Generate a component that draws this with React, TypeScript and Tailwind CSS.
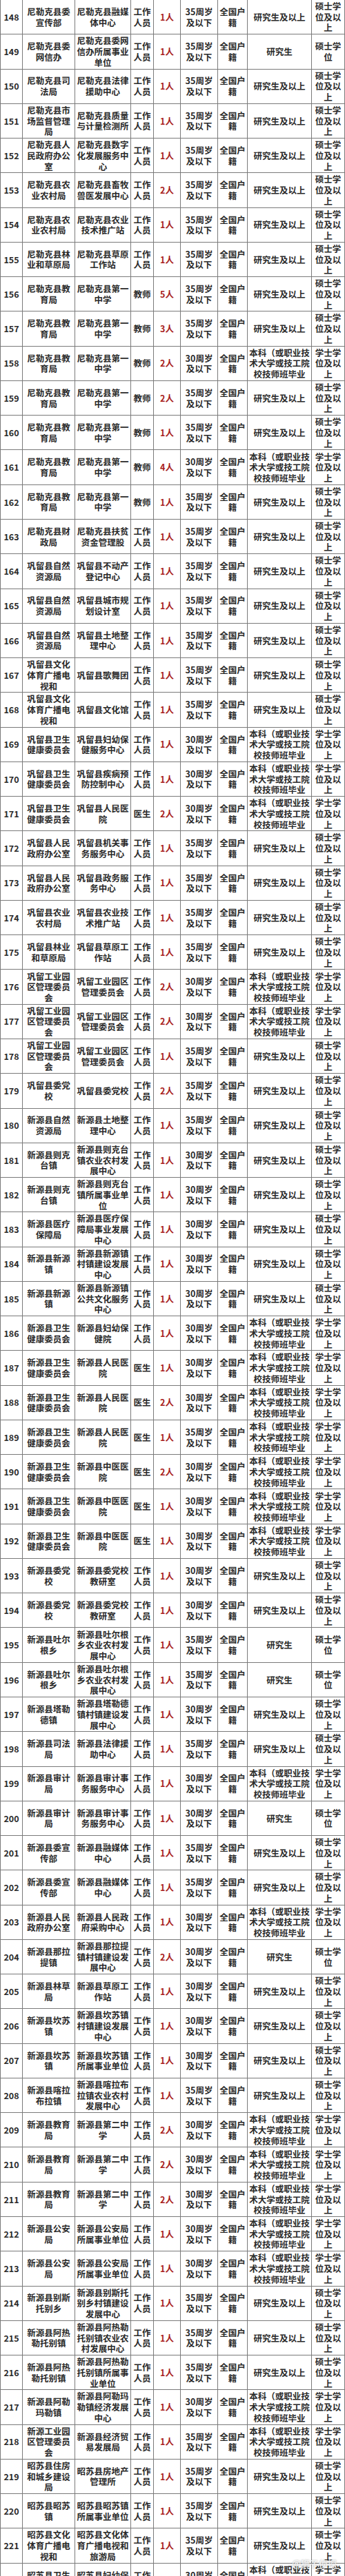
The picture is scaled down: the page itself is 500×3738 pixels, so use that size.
import React from 'react';

type Edu = 'Y' | 'G' | 'B';
type Row = [number, string, string, string, number, number, Edu];

const W = '工作人员';
const T = '教师';
const D = '医生';

const NLK_EDU = '尼勒克县教育局';
const NLK_1Z = '尼勒克县第一中学';
const GL_WT = '巩留县文化体育广播电视和';
const GL_WJ = '巩留县卫生健康委员会';
const GL_YQ = '巩留工业园区管理委员会';
const XY_WJ = '新源县卫生健康委员会';

const rows: Row[] = [
  [148, '尼勒克县委宣传部', '尼勒克县融媒体中心', W, 1, 35, 'Y'],
  [149, '尼勒克县委网信办', '尼勒克县委网信办所属事业单位', W, 1, 35, 'G'],
  [150, '尼勒克县司法局', '尼勒克县法律援助中心', W, 1, 35, 'Y'],
  [151, '尼勒克县市场监督管理局', '尼勒克县质量与计量检测所', W, 1, 35, 'Y'],
  [152, '尼勒克县人民政府办公室', '尼勒克县数字化发展服务中心', W, 1, 35, 'Y'],
  [153, '尼勒克县农业农村局', '尼勒克县畜牧兽医发展中心', W, 2, 35, 'Y'],
  [154, '尼勒克县农业农村局', '尼勒克县农业技术推广站', W, 1, 35, 'Y'],
  [155, '尼勒克县林业和草原局', '尼勒克县草原工作站', W, 1, 35, 'Y'],
  [156, NLK_EDU, NLK_1Z, T, 5, 35, 'Y'],
  [157, NLK_EDU, NLK_1Z, T, 3, 35, 'Y'],
  [158, NLK_EDU, NLK_1Z, T, 2, 30, 'B'],
  [159, NLK_EDU, NLK_1Z, T, 2, 35, 'Y'],
  [160, NLK_EDU, NLK_1Z, T, 1, 35, 'Y'],
  [161, NLK_EDU, NLK_1Z, T, 4, 30, 'B'],
  [162, NLK_EDU, NLK_1Z, T, 1, 35, 'Y'],
  [163, '尼勒克县财政局', '尼勒克县扶贫资金管理股', W, 1, 35, 'Y'],
  [164, '巩留县自然资源局', '巩留县不动产登记中心', W, 1, 35, 'Y'],
  [165, '巩留县自然资源局', '巩留县城市规划设计室', W, 1, 35, 'Y'],
  [166, '巩留县自然资源局', '巩留县土地整理中心', W, 1, 35, 'Y'],
  [167, GL_WT, '巩留县歌舞团', W, 1, 35, 'Y'],
  [168, GL_WT, '巩留县文化馆', W, 1, 35, 'Y'],
  [169, GL_WJ, '巩留县妇幼保健服务中心', W, 1, 30, 'B'],
  [170, GL_WJ, '巩留县疾病预防控制中心', W, 1, 30, 'B'],
  [171, GL_WJ, '巩留县人民医院', D, 2, 30, 'B'],
  [172, '巩留县人民政府办公室', '巩留县机关事务服务中心', W, 1, 35, 'Y'],
  [173, '巩留县人民政府办公室', '巩留县政务服务中心', W, 1, 35, 'Y'],
  [174, '巩留县农业农村局', '巩留县农业技术推广站', W, 1, 35, 'Y'],
  [175, '巩留县林业和草原局', '巩留县草原工作站', W, 1, 35, 'Y'],
  [176, GL_YQ, GL_YQ, W, 2, 30, 'B'],
  [177, GL_YQ, GL_YQ, W, 2, 30, 'B'],
  [178, GL_YQ, GL_YQ, W, 1, 35, 'Y'],
  [179, '巩留县委党校', '巩留县委党校', W, 2, 35, 'Y'],
  [180, '新源县自然资源局', '新源县土地整理中心', W, 1, 35, 'Y'],
  [181, '新源县则克台镇', '新源县则克台镇农业农村发展中心', W, 1, 30, 'Y'],
  [182, '新源县则克台镇', '新源县则克台镇所属事业单位', W, 1, 30, 'Y'],
  [183, '新源县医疗保障局', '新源县医疗保障局事业发展中心', W, 1, 30, 'Y'],
  [184, '新源县新源镇', '新源县新源镇村镇建设发展中心', W, 1, 30, 'Y'],
  [185, '新源县新源镇', '新源县新源镇公共文化服务中心', W, 1, 30, 'Y'],
  [186, XY_WJ, '新源县妇幼保健院', W, 1, 30, 'B'],
  [187, XY_WJ, '新源县人民医院', D, 1, 30, 'B'],
  [188, XY_WJ, '新源县人民医院', D, 2, 30, 'B'],
  [189, XY_WJ, '新源县人民医院', D, 1, 35, 'B'],
  [190, XY_WJ, '新源县中医医院', D, 2, 30, 'B'],
  [191, XY_WJ, '新源县中医医院', D, 1, 30, 'B'],
  [192, XY_WJ, '新源县中医医院', D, 1, 30, 'B'],
  [193, '新源县委党校', '新源县委党校教研室', W, 1, 30, 'Y'],
  [194, '新源县委党校', '新源县委党校教研室', W, 1, 30, 'Y'],
  [195, '新源县吐尔根乡', '新源县吐尔根乡农业农村发展中心', W, 1, 35, 'G'],
  [196, '新源县吐尔根乡', '新源县吐尔根乡农业农村发展中心', W, 1, 35, 'G'],
  [197, '新源县塔勒德镇', '新源县塔勒德镇村镇建设发展中心', W, 1, 30, 'Y'],
  [198, '新源县司法局', '新源县法律援助中心', W, 1, 35, 'Y'],
  [199, '新源县审计局', '新源县审计事务服务中心', W, 1, 30, 'B'],
  [200, '新源县审计局', '新源县审计事务服务中心', W, 1, 30, 'G'],
  [201, '新源县委宣传部', '新源县融媒体中心', W, 1, 35, 'Y'],
  [202, '新源县委宣传部', '新源县融媒体中心', W, 1, 35, 'Y'],
  [203, '新源县人民政府办公室', '新源县人民政府采购中心', W, 1, 30, 'B'],
  [204, '新源县那拉提镇', '新源县那拉提镇村镇建设发展中心', W, 2, 30, 'G'],
  [205, '新源县林草局', '新源县草原工作站', W, 1, 30, 'Y'],
  [206, '新源县坎苏镇', '新源县坎苏镇村镇建设发展中心', W, 1, 30, 'Y'],
  [207, '新源县坎苏镇', '新源县坎苏镇所属事业单位', W, 1, 30, 'Y'],
  [208, '新源县喀拉布拉镇', '新源县喀拉布拉镇农业农村发展中心', W, 1, 35, 'Y'],
  [209, '新源县教育局', '新源县第二中学', W, 2, 30, 'B'],
  [210, '新源县教育局', '新源县第二中学', W, 2, 30, 'B'],
  [211, '新源县教育局', '新源县第二中学', W, 2, 30, 'B'],
  [212, '新源县公安局', '新源县公安局所属事业单位', W, 1, 30, 'B'],
  [213, '新源县公安局', '新源县公安局所属事业单位', W, 1, 30, 'B'],
  [214, '新源县别斯托别乡', '新源县别斯托别乡村镇建设发展中心', W, 1, 35, 'Y'],
  [215, '新源县阿热勒托别镇', '新源县阿热勒托别镇农业农村发展中心', W, 1, 35, 'Y'],
  [216, '新源县阿热勒托别镇', '新源县阿热勒托别镇所属事业单位', W, 1, 35, 'Y'],
  [217, '新源县阿勒玛勒镇', '新源县阿勒玛勒镇经济发展中心', W, 1, 30, 'B'],
  [218, '新源工业园区管理委员会', '新源县经济贸易发展局', W, 1, 35, 'B'],
  [219, '昭苏县住房和城乡建设局', '昭苏县房地产管理所', W, 1, 35, 'Y'],
  [220, '昭苏县昭苏镇', '昭苏县昭苏镇所属事业单位', W, 1, 35, 'Y'],
  [221, '昭苏县文化体育广播电视和', '昭苏县文化体育广播电视和旅游局', W, 1, 35, 'Y'],
  [222, '昭苏县卫生健康委员会', '昭苏县妇幼保健院', W, 1, 30, 'B'],
];

const EDU: Record<Edu, [string, string]> = {
  Y: ['研究生及以上', '硕士学位及以上'],
  G: ['研究生', '硕士学位'],
  B: ['本科（或职业技术大学或技工院校技师班毕业', '学士学位及以上'],
};

const cell =
  'flex items-center justify-center text-center border-r border-[#7a7a7a] px-px overflow-hidden';

function TableRow({ row }: { row: Row }) {
  const [no, dept, unit, post, count, age, edu] = row;
  const [degree, title] = EDU[edu];
  return (
    <div className="grid grid-cols-[33px_76px_81px_33px_39px_54px_43px_93px_48px] h-[50.27px] shrink-0 border-b border-[#7a7a7a]">
      <div className={`${cell} border-l`}>{no}</div>
      <div className={cell}>{dept}</div>
      <div className={cell}>{unit}</div>
      <div className={cell}>{post}</div>
      <div className={`${cell} text-[#a81e1e]`}>{count}人</div>
      <div className={`${cell} flex-col`}>
        <span>{age}周岁</span>
        <span>及以下</span>
      </div>
      <div className={cell}>全国户籍</div>
      <div className={cell}>{degree}</div>
      <div className={cell}>{title}</div>
    </div>
  );
}

export default function App() {
  return (
    <div className="relative w-[500px] h-[3738px] overflow-hidden bg-white">
      <div
        className="flex flex-col text-[12.5px] leading-[15.7px] font-semibold text-[#2a2a2a]"
        style={{ fontFamily: '"Noto Sans CJK SC", sans-serif' }}
      >
        {rows.map((r) => (
          <TableRow key={r[0]} row={r} />
        ))}
      </div>
      <div
        className="absolute right-[12px] top-[3710px] text-[13px] font-bold text-white/80 [text-shadow:0_0_2px_rgba(0,0,0,0.35)]"
        style={{ fontFamily: '"Noto Sans CJK SC", sans-serif' }}
      >
        @狮子侦探
      </div>
    </div>
  );
}
